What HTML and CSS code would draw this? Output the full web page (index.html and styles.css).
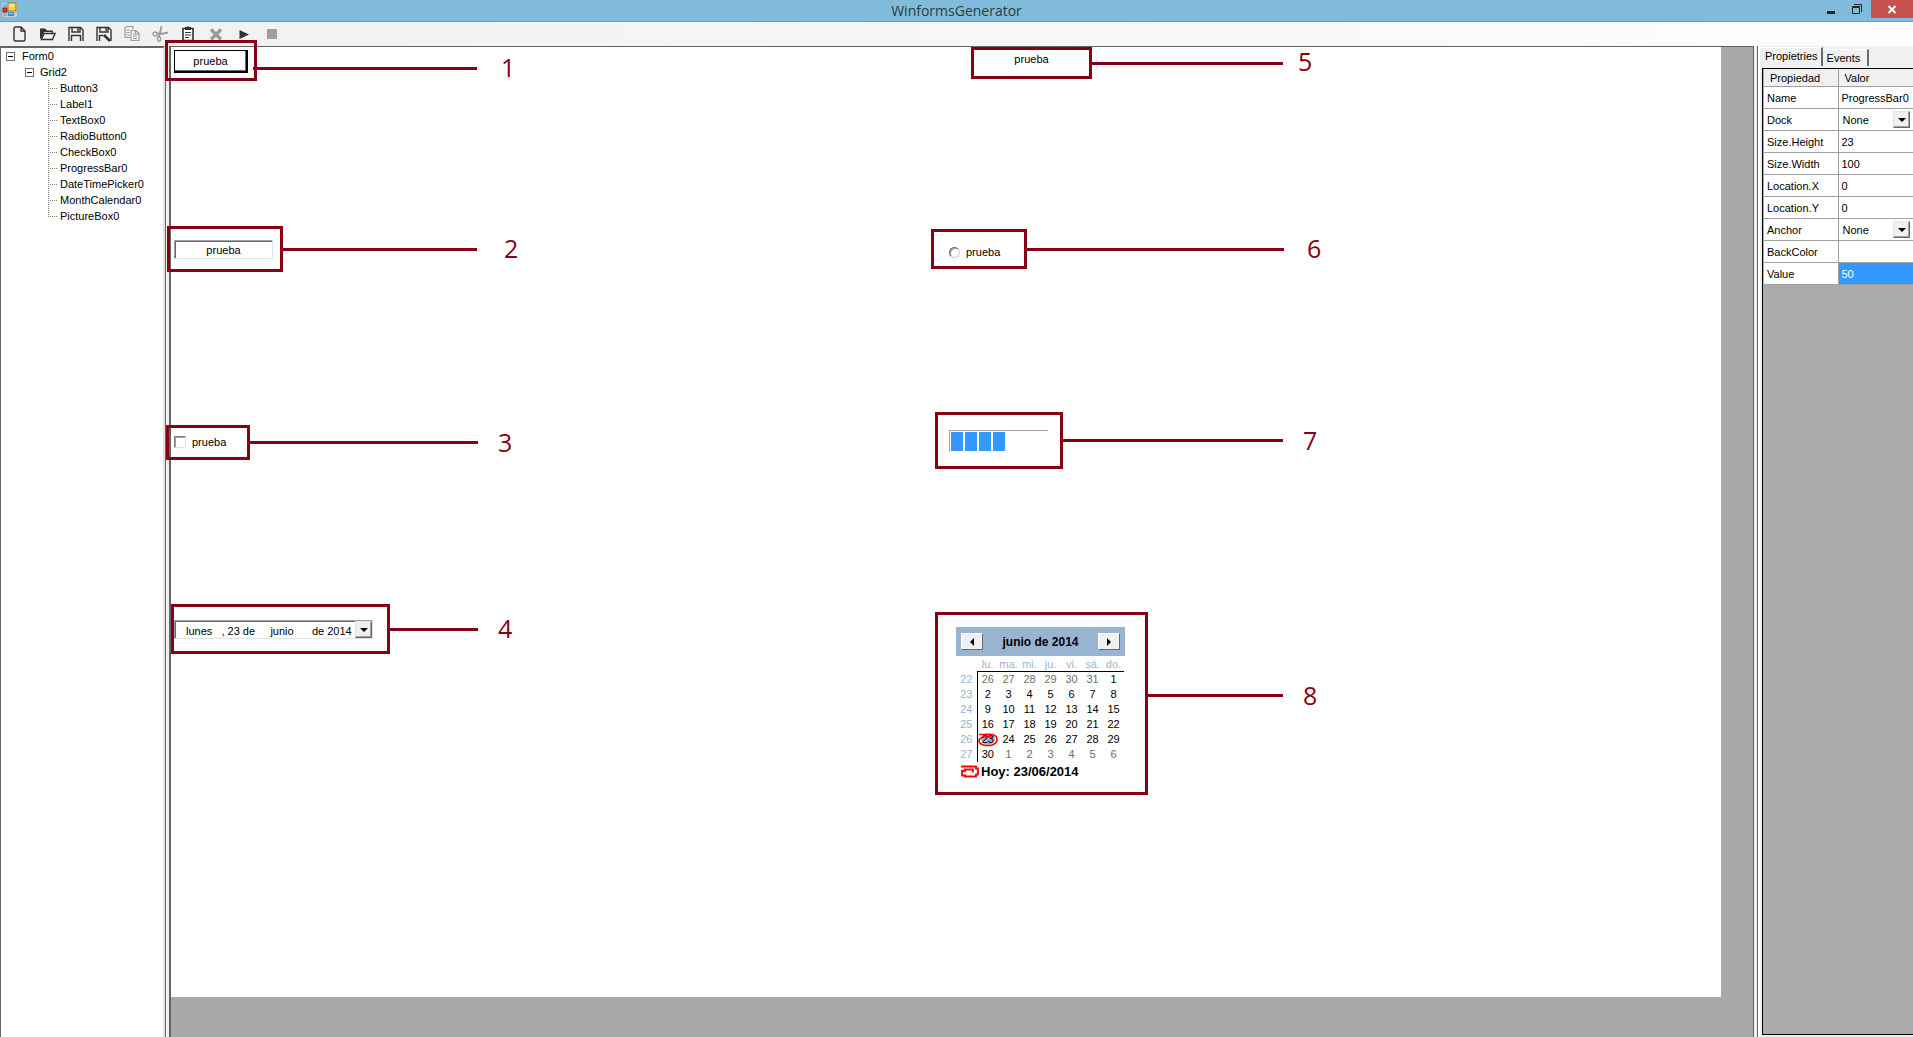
FILE: index.html
```html
<!DOCTYPE html>
<html lang="es">
<head>
<meta charset="utf-8">
<title>WinformsGenerator</title>
<link rel="stylesheet" href="styles.css">
</head>
<body>
<header class="titlebar">
  <svg class="app-icon" width="16" height="16" viewBox="0 0 16 16" aria-hidden="true">
    <rect x="0" y="1" width="15" height="14" fill="#c3cdd2"/>
    <rect x="1" y="2" width="4" height="3" fill="#7fbbd8"/>
    <rect x="1" y="11" width="4" height="3" fill="#7fbbd8"/>
    <rect x="1" y="6" width="4" height="4" fill="#d8403a" stroke="#8f1a16"/>
    <rect x="6" y="1" width="8" height="8" fill="#f8cf4c" stroke="#b37a10"/>
    <path d="M7 2h5v3H7z" fill="#fdeaa0"/>
    <rect x="6" y="10" width="6" height="4" fill="#4a86e0"/>
    <path d="M7 11h4v1H7z" fill="#a8c8f5"/>
  </svg>
  <h1 class="title">WinformsGenerator</h1>
  <div class="window-buttons">
    <button class="win-btn" aria-label="Minimizar"><svg width="12" height="16" viewBox="0 0 12 16"><path d="M2 10h8v3H2z" fill="#222"/></svg></button>
    <button class="win-btn" aria-label="Restaurar"><svg width="12" height="16" viewBox="0 0 12 16"><path d="M1.500 6.500h7v6h-7zM1 5.500h8M3 3.500h7.500V11" fill="none" stroke="#222"/></svg></button>
    <button class="win-btn close" aria-label="Cerrar"><svg width="10" height="16" viewBox="0 0 10 16"><path d="M1.500 5l7 7M8.500 5l-7 7" stroke="#fff" stroke-width="2"/></svg></button>
  </div>
</header>

<nav class="toolbar" aria-label="Herramientas">
  <button class="tool" aria-label="Nuevo"><svg width="16" height="16" viewBox="0 0 16 16"><path d="M2 2.500Q2 1 3.500 1H9l4 4v8.500q0 1.500-1.500 1.500h-8Q2 15 2 13.500zM9 1v4h4" fill="none" stroke="#333" stroke-width="1.400"/></svg></button>
  <button class="tool" aria-label="Abrir"><svg width="16" height="16" viewBox="0 0 16 16"><path d="M0 13V2.500h5l2 2h6V7h-1.500V6H4L1.500 12z" fill="#333"/><path d="M4 7.500h11L12.500 13.500H1.500z" fill="#f1f1f1" stroke="#333" stroke-width="1.400"/></svg></button>
  <button class="tool" aria-label="Guardar"><svg width="16" height="16" viewBox="0 0 16 16"><path d="M1 15V1.500h11.500L15 4v11M3.500 15V9.500h9V15M4 1.500V6h8V1.500M10 2v3" fill="none" stroke="#333" stroke-width="1.400"/></svg></button>
  <button class="tool" aria-label="Guardar como"><svg width="16" height="16" viewBox="0 0 16 16"><path d="M1 15V1.500h11.500L15 4v11M3.500 15V9.500h4M4 1.500V6h8V1.500M10 2v3" fill="none" stroke="#333" stroke-width="1.400"/><path d="M8 9l6 6" stroke="#333" stroke-width="2.600"/></svg></button>
  <button class="tool" aria-label="Copiar"><svg width="16" height="16" viewBox="0 0 16 16"><path d="M6 11.500H1V2l1.500-1.500H9V3M2.500 4h3M2.500 6.500h3M2.500 9h3M7 4.500h5l3 3v7H7zM11.500 5v3H15M9 8h2M9 10h4M9 12.500h4" fill="none" stroke="#9b9b9b" stroke-width="1.200"/></svg></button>
  <button class="tool" aria-label="Cortar"><svg width="16" height="16" viewBox="0 0 16 16"><path d="M9.500 0L8 7l-1.500 4M16 6.500L9 8 5 7.500" fill="none" stroke="#9b9b9b" stroke-width="1.800"/><circle cx="3" cy="8" r="2" fill="none" stroke="#9b9b9b" stroke-width="1.400"/><ellipse cx="7" cy="13" rx="1.600" ry="2.200" fill="none" stroke="#9b9b9b" stroke-width="1.400"/></svg></button>
  <button class="tool" aria-label="Pegar"><svg width="16" height="16" viewBox="0 0 16 16"><path d="M3 2.500h10v12H3z" fill="#fff" stroke="#333" stroke-width="1.600"/><path d="M5 1h2l1-1 1 1h2v3H5z" fill="#333"/><path d="M5 6.500h6M5 9h6M5 11.500h4" stroke="#333" stroke-width="1.200"/></svg></button>
  <button class="tool" aria-label="Eliminar"><svg width="16" height="16" viewBox="0 0 16 16"><path d="M3 3.500l10 10M13 3.500l-10 10" stroke="#9b9b9b" stroke-width="3.400"/></svg></button>
  <button class="tool" aria-label="Ejecutar"><svg width="16" height="16" viewBox="0 0 16 16"><path d="M3.500 4L13 8.500 3.500 13z" fill="#333"/></svg></button>
  <button class="tool" aria-label="Detener"><svg width="16" height="16" viewBox="0 0 16 16"><path d="M3 3h10v10H3z" fill="#9f9f9f"/></svg></button>
</nav>

<main class="workspace">
  <aside class="tree" aria-label="Controles">
    <div class="node root"><button class="toggle" aria-label="Contraer Form0"></button>Form0</div>
    <div class="node branch"><button class="toggle" aria-label="Contraer Grid2"></button>Grid2</div>
    <ul class="leaves">
      <li>Button3</li>
      <li>Label1</li>
      <li>TextBox0</li>
      <li>RadioButton0</li>
      <li>CheckBox0</li>
      <li>ProgressBar0</li>
      <li>DateTimePicker0</li>
      <li>MonthCalendar0</li>
      <li>PictureBox0</li>
    </ul>
  </aside>

  <section class="designer">
    <div class="form">
      <div class="cell">
        <div class="callout c1">
          <div class="frame"><button class="demo-button">prueba</button></div>
          <i class="line"></i><span class="num">1</span>
        </div>
      </div>
      <div class="cell">
        <div class="callout c5">
          <div class="frame"><span class="demo-label">prueba</span></div>
          <i class="line"></i><span class="num">5</span>
        </div>
      </div>
      <div class="cell">
        <div class="callout c2">
          <div class="frame"><input class="demo-text" type="text" value="prueba" aria-label="TextBox0"></div>
          <i class="line"></i><span class="num">2</span>
        </div>
      </div>
      <div class="cell">
        <div class="callout c6">
          <div class="frame"><label class="option"><input class="demo-radio" type="radio">prueba</label></div>
          <i class="line"></i><span class="num">6</span>
        </div>
      </div>
      <div class="cell">
        <div class="callout c3">
          <div class="frame"><label class="option"><input class="demo-check" type="checkbox">prueba</label></div>
          <i class="line"></i><span class="num">3</span>
        </div>
      </div>
      <div class="cell">
        <div class="callout c7">
          <div class="frame"><div class="demo-progress" role="progressbar" aria-valuenow="50" aria-label="ProgressBar0"><i></i><i></i><i></i><i></i></div></div>
          <i class="line"></i><span class="num">7</span>
        </div>
      </div>
      <div class="cell">
        <div class="callout c4">
          <div class="frame">
            <div class="demo-date">
              <input type="text" value="lunes   , 23 de     junio      de 2014" aria-label="DateTimePicker0">
              <button class="drop" aria-label="Abrir calendario"></button>
            </div>
          </div>
          <i class="line"></i><span class="num">4</span>
        </div>
      </div>
      <div class="cell">
        <div class="callout c8">
          <div class="frame">
            <div class="calendar">
              <div class="cal-head">
                <button class="cal-nav" aria-label="Mes anterior"><svg width="4" height="8" viewBox="0 0 4 8"><path d="M4 0v8L0 4z"/></svg></button>
                <span>junio de 2014</span>
                <button class="cal-nav" aria-label="Mes siguiente"><svg width="4" height="8" viewBox="0 0 4 8"><path d="M0 0v8l4-4z"/></svg></button>
              </div>
              <table class="cal-grid">
                <thead><tr><td></td><th>lu.</th><th>ma.</th><th>mi.</th><th>ju.</th><th>vi.</th><th>sá.</th><th>do.</th></tr></thead>
                <tbody>
                <tr><th>22</th><td class="out">26</td><td class="out">27</td><td class="out">28</td><td class="out">29</td><td class="out">30</td><td class="out">31</td><td>1</td></tr>
                <tr><th>23</th><td>2</td><td>3</td><td>4</td><td>5</td><td>6</td><td>7</td><td>8</td></tr>
                <tr><th>24</th><td>9</td><td>10</td><td>11</td><td>12</td><td>13</td><td>14</td><td>15</td></tr>
                <tr><th>25</th><td>16</td><td>17</td><td>18</td><td>19</td><td>20</td><td>21</td><td>22</td></tr>
                <tr><th>26</th><td class="today"><span>23</span><svg class="ring" width="20" height="14" viewBox="0 0 20 14"><path d="M1 1.500h13q5 1 5 5t-6 6H7Q1 11 1 8t5-4h8" fill="none" stroke="red" stroke-width="1.600"/></svg></td><td>24</td><td>25</td><td>26</td><td>27</td><td>28</td><td>29</td></tr>
                <tr><th>27</th><td>30</td><td class="out">1</td><td class="out">2</td><td class="out">3</td><td class="out">4</td><td class="out">5</td><td class="out">6</td></tr>
                </tbody>
              </table>
              <div class="cal-today"><svg width="20" height="14" viewBox="0 0 20 14"><path d="M1 1.500h15v2h2v6h-2v2H5v-1H2V6h3V4.500h8v3" fill="none" stroke="red" stroke-width="1.800"/></svg>Hoy: 23/06/2014</div>
            </div>
          </div>
          <i class="line"></i><span class="num">8</span>
        </div>
      </div>
    </div>
  </section>

  <aside class="properties">
    <div class="tabs" role="tablist">
      <button class="tab active" role="tab" aria-selected="true">Propietries</button>
      <button class="tab" role="tab" aria-selected="false">Events</button>
    </div>
    <div class="grid-view">
      <table class="props">
        <thead><tr><th>Propiedad</th><th>Valor</th></tr></thead>
        <tbody>
        <tr><td>Name</td><td>ProgressBar0</td></tr>
        <tr><td>Dock</td><td><div class="combo"><select aria-label="Dock"><option>None</option></select><span class="drop"></span></div></td></tr>
        <tr><td>Size.Height</td><td>23</td></tr>
        <tr><td>Size.Width</td><td>100</td></tr>
        <tr><td>Location.X</td><td>0</td></tr>
        <tr><td>Location.Y</td><td>0</td></tr>
        <tr><td>Anchor</td><td><div class="combo"><select aria-label="Anchor"><option>None</option></select><span class="drop"></span></div></td></tr>
        <tr><td>BackColor</td><td></td></tr>
        <tr><td>Value</td><td class="selected">50</td></tr>
        </tbody>
      </table>
    </div>
  </aside>
</main>
</body>
</html>
```

FILE: styles.css
```css
* { box-sizing: border-box; }

body {
  margin: 0;
  height: 100vh;
  display: flex;
  flex-direction: column;
  background: #f0f0f0;
  color: #000;
  font: 11px/16px "Liberation Sans", Arial, sans-serif;
  overflow: hidden;
}

button, input, select {
  margin: 0;
  padding: 0;
  border: 0;
  border-radius: 0;
  background: none;
  color: inherit;
  font: inherit;
}

svg { display: block; }

/* Title bar */
.titlebar {
  display: grid;
  grid-template-columns: 1fr auto 1fr;
  height: 22px;
  background: #80bcd9;
  border-bottom: 1px solid #6a9db5;
}
.app-icon { margin: 2px 0 0 2px; }
.title {
  margin: 0;
  font: 14px/21px "Open Sans", "Noto Sans", sans-serif;
  color: #2c3b43;
}
.window-buttons { display: flex; justify-content: flex-end; align-items: flex-start; }
.win-btn { width: 26px; height: 18px; display: grid; place-items: center; }
.win-btn.close { width: 42px; margin-left: 1px; background: #c75050; }

/* Toolbar */
.toolbar {
  display: flex;
  align-items: center;
  height: 24px;
  padding-left: 6px;
  background: linear-gradient(90deg, #f0f0f0, #fdfdfd);
}
.tool { width: 28px; height: 24px; display: grid; place-items: center; }

/* Three panes */
.workspace {
  flex: 1;
  min-height: 0;
  display: grid;
  grid-template-columns: 165px 1fr 156px;
}

/* Control tree */
.tree {
  background: #fff;
  border-top: 2px solid #646464;
  border-left: 1px solid #646464;
  border-right: 2px solid #e3e3e3;
}
.node { display: flex; align-items: center; height: 16px; gap: 7px; }
.root { padding-left: 5px; }
.branch { padding-left: 24px; gap: 6px; }
.toggle {
  width: 9px;
  height: 9px;
  border: 1px solid #707070;
  background: linear-gradient(#000, #000) center / 5px 1px no-repeat;
}
.leaves {
  margin: 0 0 0 47px;
  padding: 0;
  list-style: none;
  background: repeating-linear-gradient(#808080 0 1px, transparent 1px 2px) 0 0 / 1px 136px no-repeat;
}
.leaves li { display: flex; align-items: center; gap: 3px; height: 16px; }
.leaves li::before { content: ""; width: 9px; border-top: 1px dotted #808080; }

/* Design surface */
.designer {
  display: flex;
  padding: 0 32px 40px 0;
  background: #a9a9a9;
  border: solid #646464;
  border-width: 1px 1px 0 2px;
  box-shadow: -3px 0 #f0f0f0, -4px 0 #646464;
  margin: 0 3px 0 4px;
}
.form {
  flex: 1;
  display: grid;
  grid-template-columns: 1fr 1fr;
  grid-template-rows: repeat(5, 1fr);
  background: #fff;
}
.cell { position: relative; min-height: 0; }

/* Numbered callouts laid over the surface */
.callout { position: absolute; display: flex; align-items: center; }
.frame { border: 3px solid #880015; display: flex; align-items: flex-start; }
.line { height: 3px; background: #880015; }
.num { color: #880015; font: 25px/26px "Open Sans", "Noto Sans", sans-serif; margin: 0 0 2px 20px; }

.c1 { left: -6px; top: -7px; }
.c1 .frame { width: 92px; height: 41px; padding: 7px 6px; }
.c1 .line { width: 224px; margin: 16px 0 0 -4px; }
.c1 .num { margin: 12px 0 0 24px; }
.c2 { left: -4px; top: -11px; }
.c2 .frame { width: 116px; height: 46px; padding: 11px 4px; }
.c2 .line { width: 194px; }
.c2 .num { margin-left: 27px; }
.c3 { left: -5px; top: -2px; }
.c3 .frame { width: 84px; height: 35px; padding: 6px 5px; }
.c3 .line { width: 228px; }
.c4 { left: 0; top: -13px; }
.c4 .frame { width: 219px; height: 50px; padding: 13px 0; }
.c4 .line { width: 88px; }
.c5 { left: 25px; top: 0; }
.c5 .frame { width: 121px; height: 32px; justify-content: center; }
.c5 .line { width: 191px; }
.c5 .num { margin: 0 0 4px 15px; }
.c6 { left: -15px; top: -8px; }
.c6 .frame { width: 96px; height: 40px; padding: 12px 15px; }
.c6 .line { width: 257px; }
.c6 .num { margin-left: 23px; }
.c7 { left: -11px; top: -15px; }
.c7 .frame { width: 128px; height: 57px; padding: 15px 11px; }
.c7 .line { width: 220px; }
.c8 { left: -11px; top: -5px; }
.c8 .frame { width: 213px; height: 183px; padding: 12px 18px; }
.c8 .line { width: 135px; margin-bottom: 16px; }
.c8 .num { margin-bottom: 18px; }

/* Sample controls */
.demo-button {
  width: 75px;
  height: 23px;
  border: solid #000;
  border-width: 1px 2px 2px 1px;
  box-shadow: inset -1px -1px #696969;
}
.demo-label { line-height: 18px; }
.demo-text {
  width: 99px;
  height: 19px;
  text-align: center;
  border: 1px solid;
  border-color: #a0a0a0 #e3e3e3 #e3e3e3 #a0a0a0;
  box-shadow: inset 1px 1px #696969;
}
.option { display: flex; align-items: center; gap: 6px; }
.demo-check, .demo-radio {
  appearance: none;
  width: 12px;
  height: 12px;
  border: 1px solid;
  border-color: #808080 #e3e3e3 #e3e3e3 #808080;
}
.demo-check { box-shadow: inset 1px 1px #a0a0a0; }
.demo-radio {
  width: 11px;
  height: 11px;
  border-radius: 50%;
  border-color: #606060 #d0d0d0 #d0d0d0 #606060;
  box-shadow: inset 1px 1px #a0a0a0;
}
.demo-progress {
  display: flex;
  gap: 2px;
  width: 99px;
  height: 22px;
  padding: 1px;
  border: solid #a0a0a0;
  border-width: 1px 0 0 1px;
}
.demo-progress i { width: 12px; height: 19px; background: #3399ff; }

.demo-date {
  display: flex;
  width: 199px;
  height: 19px;
  border: 1px solid;
  border-color: #a0a0a0 #e3e3e3 #e3e3e3 #a0a0a0;
  box-shadow: inset 1px 1px #696969;
}
.demo-date input { flex: 1; min-width: 0; padding: 2px 0 0 11px; }

.drop {
  display: grid;
  place-items: center;
  width: 17px;
  height: 17px;
  background: #f0f0f0;
  border: 1px solid;
  border-color: #e3e3e3 #696969 #696969 #e3e3e3;
  box-shadow: inset -1px -1px #a0a0a0;
}
.drop::after {
  content: "";
  border: solid transparent;
  border-width: 4px 4px 0;
  border-top-color: #000;
}

/* Month calendar */
.calendar { width: 169px; }
.cal-head {
  display: flex;
  align-items: center;
  justify-content: space-between;
  height: 29px;
  padding: 0 5px;
  background: #99b4d1;
  font-size: 12px;
  font-weight: bold;
}
.cal-nav {
  width: 22px;
  height: 17px;
  display: grid;
  place-items: center;
  background: #f0f0f0;
  border: 1px solid;
  border-color: #fff #696969 #696969 #fff;
}
.cal-grid { width: 168px; border-collapse: collapse; table-layout: fixed; text-align: center; }
.cal-grid th, .cal-grid td { padding: 0; height: 15px; line-height: 15px; }
.cal-grid th { font-weight: normal; color: #99b4d1; }
.cal-grid thead { border-top: 1px solid transparent; }
.cal-grid thead th, .cal-grid thead td { height: 14px; line-height: 14px; }
.cal-grid thead th { border-bottom: 1px solid #000; }
.cal-grid tbody th { border-right: 1px solid #000; }
.cal-grid .out { color: #6d6d6d; }
.today { position: relative; }
.today span { border-radius: 50%; background: #99b4d1; padding: 0 1px; }
.ring { position: absolute; left: 0; top: 1px; }
.cal-today { display: flex; align-items: center; gap: 1px; height: 20px; padding-left: 4px; font-size: 13px; font-weight: bold; }

/* Property panel */
.properties {
  display: flex;
  flex-direction: column;
  border-left: 1px solid #646464;
  padding: 1px 0 2px 2px;
  background: linear-gradient(90deg, #fff 2px, #f0f0f0 2px);
  min-width: 0;
}
.tabs { display: flex; align-items: flex-end; height: 19px; }
.tab {
  height: 17px;
  padding: 0 7px 0 4px;
  border-right: 2px solid #696969;
  border-top: 1px solid #fff;
}
.tab.active { height: 19px; padding: 0 3px 2px 5px; }
.grid-view {
  flex: 1;
  margin: 2px 0 0 2px;
  padding: 0 0 0 1px;
  border: solid #000;
  border-width: 1px 0 1px 1px;
  background: #ababab;
}
.props { width: 100%; border-collapse: collapse; table-layout: fixed; background: #fff; }
.props th, .props td { height: 22px; padding: 0 0 0 3px; border: 1px solid #a0a0a0; text-align: left; }
.props th { height: 17px; padding-left: 6px; line-height: 15px; font-weight: normal; background: #f0f0f0; border-top-color: #f0f0f0; }
.props th:first-child, .props td:first-child { width: 74px; border-left: 0; }
.props th:last-child, .props td:last-child { border-right: 0; }
.props .selected { background: #3399ff; color: #fff; }
.combo { position: relative; height: 21px; display: flex; align-items: center; }
.combo select { appearance: none; width: 100%; height: 20px; padding-left: 1px; }
.combo .drop { position: absolute; right: 3px; top: 2px; pointer-events: none; }
```
